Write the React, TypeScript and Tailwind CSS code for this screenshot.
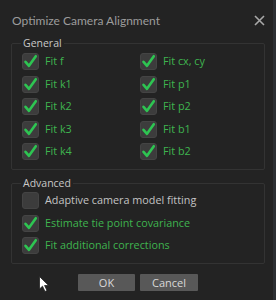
import React from 'react';

const font = { fontFamily: '"Segoe UI", "Open Sans", "Liberation Sans", sans-serif' };

const Check = ({ checked }: { checked: boolean }) => (
  <div className="w-[17px] h-[17px] shrink-0 rounded-[3px] bg-[#3c3c3c] border border-[#444444] grid place-items-center">
    {checked && (
      <svg width="15" height="15" viewBox="0 0 15 15">
        <path d="M2.5 7.8 L6 11.8 L12.8 2.2" fill="none" stroke="#2ec552" strokeWidth="2.6" strokeLinecap="round" strokeLinejoin="round" />
      </svg>
    )}
  </div>
);

const Row = ({ label, checked }: { label: string; checked: boolean }) => (
  <div className="flex items-center gap-[6px] h-[17px]">
    <Check checked={checked} />
    <span className={checked ? 'text-[10.8px] text-[#3fb44f]' : 'text-[10.8px] text-[#c4c4c4]'}>{label}</span>
  </div>
);

const Group = ({ title, children, className }: { title: string; children: React.ReactNode; className?: string }) => (
  <div className={'relative border border-[#333333] rounded-[2px] ' + (className ?? '')}>
    <span className="absolute -top-[8px] left-[9px] px-[2px] bg-[#232323] text-[10.5px] leading-[14px] text-[#c8c8c8]">
      {title}
    </span>
    {children}
  </div>
);

export default function App() {
  return (
    <div className="w-[276px] h-[300px] bg-[#232323] relative overflow-hidden flex" style={font}>
      <div className="flex-1 flex flex-col pl-[11px] pr-[8px]">
        <div className="flex items-center justify-between h-[40px] pt-[1px]">
          <span className="text-[12px] text-[#9c9c9c] pl-[1px]" style={{ fontFamily: 'Lato, Roboto, "Liberation Sans", sans-serif' }}>
            Optimize Camera Alignment
          </span>
          <svg width="11" height="11" viewBox="0 0 11 11">
            <path d="M1 1 L10 10 M10 1 L1 10" stroke="#a8a8a8" strokeWidth="1.6" />
          </svg>
        </div>

        <Group title="General" className="mt-[3px] h-[127px]">
          <div className="grid grid-cols-[118px_1fr] gap-y-[5.5px] pl-[10px] pt-[9px]">
            <Row label="Fit f" checked />
            <Row label="Fit cx, cy" checked />
            <Row label="Fit k1" checked />
            <Row label="Fit p1" checked />
            <Row label="Fit k2" checked />
            <Row label="Fit p2" checked />
            <Row label="Fit k3" checked />
            <Row label="Fit b1" checked />
            <Row label="Fit k4" checked />
            <Row label="Fit b2" checked />
          </div>
        </Group>

        <Group title="Advanced" className="mt-[13px] h-[81px]">
          <div className="flex flex-col gap-[5.5px] pl-[10px] pt-[8px]">
            <Row label="Adaptive camera model fitting" checked={false} />
            <Row label="Estimate tie point covariance" checked />
            <Row label="Fit additional corrections" checked />
          </div>
        </Group>

        <div className="flex justify-center gap-[5px] mt-[10px]">
          <button className="w-[57px] h-[17px] bg-[#585858] text-[11px] leading-[17px] text-[#d8d8d8] rounded-[1px]">OK</button>
          <button className="w-[58px] h-[17px] bg-[#585858] text-[11px] leading-[17px] text-[#d8d8d8] rounded-[1px]">Cancel</button>
        </div>
      </div>
      <div className="w-[3px] bg-[#2c2f33]" />

      <svg width="11" height="17" viewBox="0 0 11 17" className="absolute left-[39px] top-[276px]">
        <path d="M0.5 0.5 L0.5 13 L3.5 10.2 L6 15.5 L8 14.6 L5.6 9.5 L9.6 9.5 Z" fill="#ffffff" stroke="#222" strokeWidth="0.8" />
      </svg>
    </div>
  );
}
